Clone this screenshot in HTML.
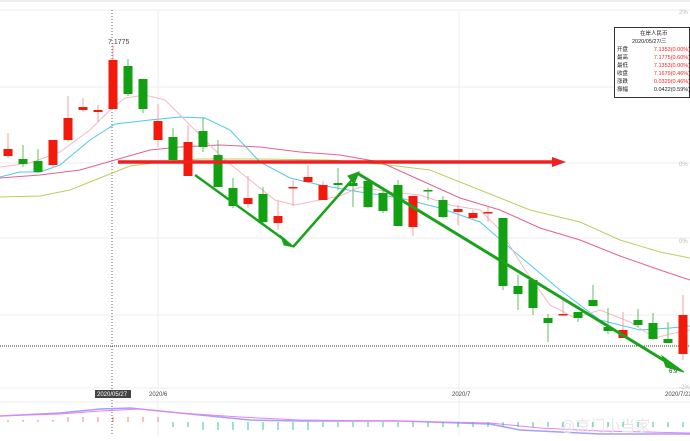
<!DOCTYPE html>
<html><head><meta charset="utf-8"><style>
body{margin:0;background:#fff;width:690px;height:436px;overflow:hidden;font-family:"Liberation Sans","Noto Sans CJK SC",sans-serif}
</style></head><body>
<svg width="690" height="436" xmlns="http://www.w3.org/2000/svg" font-family="Liberation Sans, Noto Sans CJK SC, sans-serif">
<line x1="0" y1="1" x2="690" y2="1" stroke="#ddd"/>
<g stroke="#eee" stroke-width="1">
<line x1="0" y1="10" x2="690" y2="10"/>
<line x1="0" y1="87" x2="690" y2="87"/>
<line x1="0" y1="163" x2="690" y2="163"/>
<line x1="0" y1="238" x2="690" y2="238"/>
<line x1="0" y1="315" x2="690" y2="315"/>
<line x1="0" y1="388" x2="690" y2="388"/>
<line x1="0" y1="402" x2="690" y2="402"/>
<line x1="158" y1="10" x2="158" y2="436"/>
<line x1="459" y1="10" x2="459" y2="436"/>
</g>
<line x1="112" y1="10" x2="112" y2="436" stroke="#666" stroke-dasharray="1,2"/>
<line x1="0" y1="346" x2="690" y2="346" stroke="#333" stroke-dasharray="1,1"/>
<text x="108" y="44" font-size="7" fill="#444">7.1775</text>
<g font-size="6" fill="#bbb"><text x="679" y="14">2%</text><text x="679" y="166">0%</text><text x="679" y="243">0%</text><text x="679" y="389">-2%</text></g>
<text x="669" y="373" font-size="6" fill="#333">6.9</text>
<polyline fill="none" stroke="#b8d060" stroke-width="1" points="0,197 40,196 70,190 100,178 130,166 160,162 200,159 260,159 330,160 380,164 430,170 480,190 530,210 580,222 620,240 660,252 690,258"/>
<polyline fill="none" stroke="#e86090" stroke-width="1" points="0,178 40,175 80,170 115,160 150,150 180,147 220,145 260,147 300,152 340,155 380,162 420,180 460,198 500,210 540,228 580,240 620,256 660,270 690,280"/>
<polyline fill="none" stroke="#50c8e8" stroke-width="1" points="0,177 20,172 40,172 60,165 90,140 115,124 150,120 180,117 205,118 230,130 260,162 290,178 320,185 360,192 400,198 440,208 480,222 510,248 560,290 600,320 640,330 670,328 690,326"/>
<polyline fill="none" stroke="#f4b8c8" stroke-width="1" points="0,167 30,163 60,152 90,130 110,110 125,98 145,95 165,100 185,120 200,135 225,160 250,180 275,200 295,205 320,200 340,196 360,187 390,192 420,195 450,205 480,210 500,230 525,270 550,305 575,318 600,310 630,322 655,338 670,334 690,330"/>
<g id="c"></g>
<line x1="118" y1="162" x2="555" y2="162" stroke="#f02020" stroke-width="3.5"/>
<polygon points="552,157 566,162 552,167" fill="#f02020"/>
<g stroke="#1aa31a" fill="#1aa31a">
<line x1="195" y1="175" x2="286" y2="241" stroke-width="2.5"/>
<polygon points="281,236 294,247 284,245" />
<line x1="293" y1="247" x2="352" y2="180" stroke-width="2.5"/>
<polygon points="348,176 359,172 354,184"/>
<line x1="357" y1="173" x2="670" y2="364" stroke-width="3"/>
<polygon points="662,356 684,372 666,367"/>
</g>
<rect x="95" y="390" width="36" height="8" fill="#444"/>
<g font-size="6"><text x="97" y="396" fill="#fff">2020/05/27</text><text x="149" y="396" fill="#444">2020/6</text><text x="452" y="396" fill="#444">2020/7</text><text x="665" y="396" fill="#444">2020/7/22</text></g>
<polyline fill="none" stroke="#a0a0ff" stroke-width="1.5" points="0,416 60,413 100,409 130,408 160,411 200,415 250,420 300,421 400,421 490,424 520,430 560,432 600,434 690,434"/>
<polyline fill="none" stroke="#ee80ee" stroke-width="1" points="0,416 60,414 100,411 140,409 180,413 240,417 300,420 400,421 490,423 540,428 600,431 690,433"/>
<text x="560" y="431" font-size="15" fill="#e6e6e6">@京门小当家</text>
<rect x="614.5" y="27.5" width="75" height="70" fill="#fff" stroke="#333"/>
<g font-size="5.5"><text x="640" y="35" fill="#222">在岸人民币</text><text x="632" y="43" fill="#222">2020/05/27/三</text>
<g fill="#222"><text x="617" y="51">开盘</text><text x="617" y="59">最高</text><text x="617" y="67">最低</text><text x="617" y="75">收盘</text><text x="617" y="83">涨跌</text><text x="617" y="91">振幅</text></g>
<g fill="#e22" text-anchor="end"><text x="690" y="51">7.1353(0.00%)</text><text x="690" y="59">7.1775(0.60%)</text><text x="690" y="67">7.1353(0.00%)</text><text x="690" y="75">7.1679(0.46%)</text><text x="690" y="83">0.0329(0.46%)</text><text x="690" y="91" fill="#222">0.0422(0.59%)</text></g></g>
</svg>
<script>
var d=[[8,149,156,133,158,1],[23,159,164,145,167,0],[38,161,172,149,173,0],[53,140,165,140,168,1],[68,118,140,96,142,1],[83,107,110,98,112,1],[98,110,112,105,122,1],[113,60,109,45,109,1],[128,66,94,59,96,0],[143,79,109,79,113,0],[158,121,140,104,147,1],[173,137,160,128,163,0],[188,142,176,125,176,1],[203,131,147,117,152,0],[218,155,187,140,187,0],[233,188,206,178,208,0],[248,198,204,176,208,1],[263,194,222,187,225,0],[278,216,223,201,230,1],[293,187,188,180,206,1],[308,177,182,165,183,1],[323,185,200,181,200,1],[338,183,185,168,190,0],[353,183,186,176,207,0],[368,181,207,178,208,0],[383,193,211,190,213,0],[398,185,226,180,226,0],[413,196,227,196,236,1],[428,190,191,188,200,0],[443,200,217,196,218,0],[458,209,212,205,225,1],[473,213,218,210,220,1],[488,212,213,207,222,1],[503,218,286,218,290,0],[518,286,294,275,310,0],[533,280,308,280,315,0],[548,318,323,314,342,0],[563,314,315,300,316,1],[578,312,318,312,322,0],[593,300,306,285,306,0],[608,327,331,308,334,0],[623,330,338,312,338,1],[638,320,325,309,327,0],[653,323,339,313,340,0],[668,339,343,322,343,0],[683,315,354,295,360,1]];
var s='';d.forEach(function(c){var col=c[5]?'#f21a0a':'#11a011';var wc=c[5]?'#f5a0a0':'#60c060';s+='<line x1="'+c[0]+'" y1="'+c[3]+'" x2="'+c[0]+'" y2="'+c[4]+'" stroke="'+wc+'"/>';s+='<rect x="'+(c[0]-4.5)+'" y="'+c[1]+'" width="9" height="'+Math.max(1.5,c[2]-c[1])+'" fill="'+col+'"/>';});
document.getElementById('c').innerHTML=s;
var b='';for(var x=8;x<690;x+=15){var up=x<160;var h=up?(x>60?5:2):(x>200&&x<320?8:5);b+='<line x1="'+x+'" y1="'+(up?422-h:422)+'" x2="'+x+'" y2="'+(up?422:422+h)+'" stroke="'+(up?'#f08080':'#40c0a0')+'"/>';}
document.querySelector('svg').insertAdjacentHTML('beforeend',b);
</script>
</body></html>
